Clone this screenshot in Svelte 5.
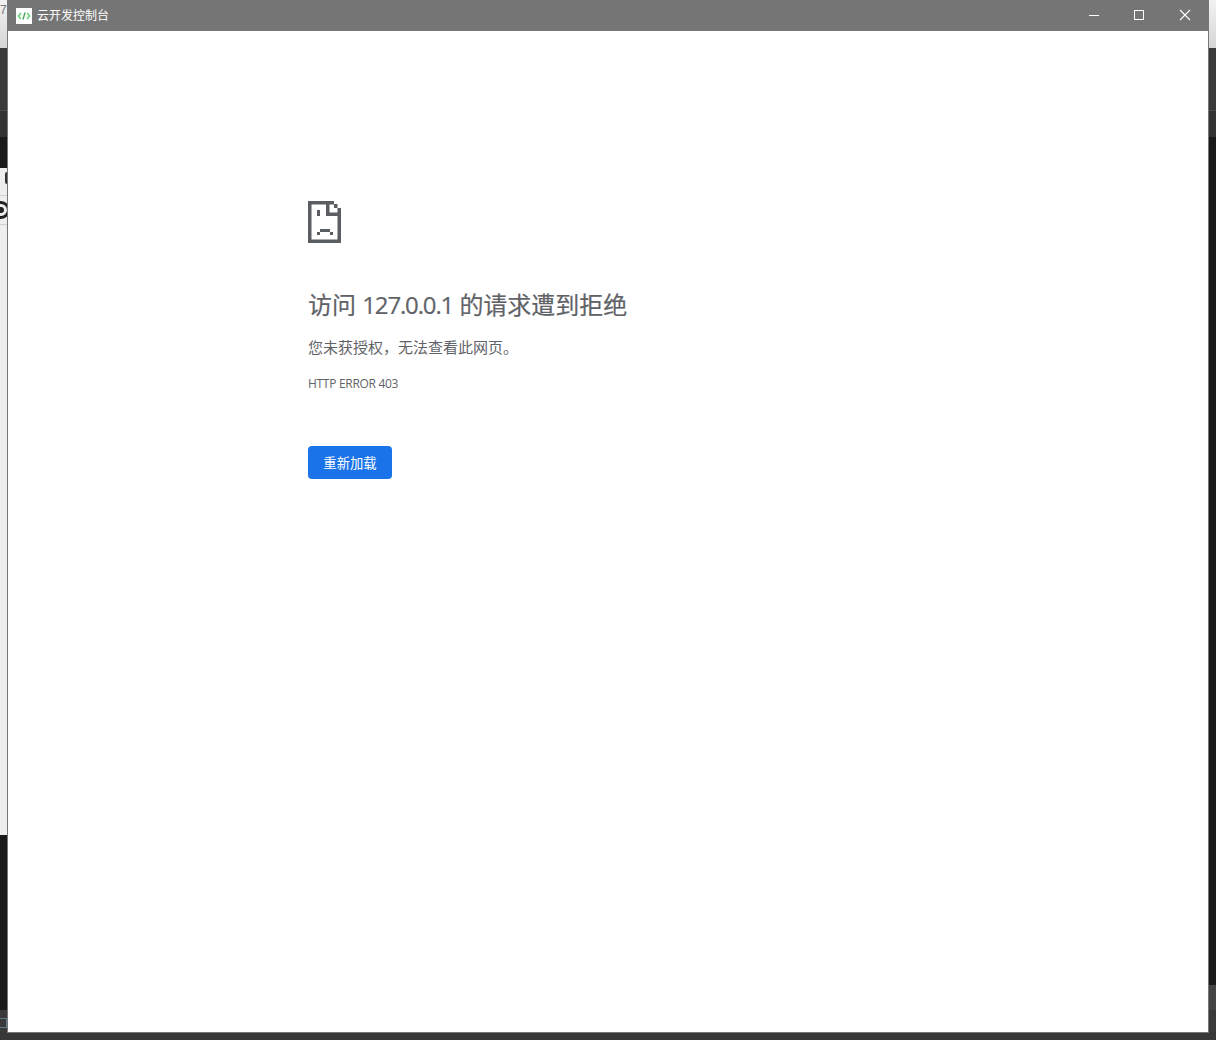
<script>
  const sadIcon = [
    [0,0,26,3.5],[0,0,3.5,42],[0,38.5,33,3.5],[29.5,11,3.5,31],
    [18,0,3.5,15],[18,11.5,15,3.5],[26,3,3.5,4],[29.5,7,3.5,5],
    [9,9,3,6],[9,31,3,3],[12,28,10,3],[22,31,3,3]
  ];
  const leftBands = [
    { h: 48, c: 'top' }, { h: 62, c: 'mid' }, { h: 27, c: 'low' }, { h: 31, c: 'ink' },
    { h: 27, c: 'paper' }, { h: 30, c: 'paper lined' }, { h: 610, c: 'paper' },
    { h: 175, c: 'ink' }, { h: 30, c: 'mid' }
  ];
  const rightBands = [
    { h: 48, c: 'top' }, { h: 62, c: 'mid' }, { h: 27, c: 'low' },
    { h: 848, c: 'ink' }, { h: 25, c: 'soft' }, { h: 30, c: 'mid' }
  ];
</script>

<div class="desk">
  <div class="edge">
    {#each leftBands as b}
      <div class="band {b.c}" style="height:{b.h}px"></div>
    {/each}
  </div>
  <div class="edge">
    {#each rightBands as b}
      <div class="band {b.c}" style="height:{b.h}px"></div>
    {/each}
  </div>
  <span class="frag-num">7</span>
  <span class="frag-paren"></span>
  <span class="frag-ring"></span>
  <span class="frag-box"></span>
  <div class="foot"></div>

  <div class="window">
    <header class="titlebar">
      <div class="logo">
        <svg width="16" height="16" viewBox="0 0 16 16" fill="none" stroke="#5fd068" stroke-width="1.4">
          <path d="M5 5 L2.5 8 L5 11" />
          <path d="M11 5 L13.5 8 L11 11" />
          <path d="M9 4.5 L7 11.5" stroke="#4aa85a" />
        </svg>
      </div>
      <span class="title">云开发控制台</span>
      <div class="controls">
        <svg class="ctl" width="46" height="30" viewBox="0 0 46 30" fill="none" stroke="#fff">
          <path d="M19 14.5 H29" />
        </svg>
        <svg class="ctl" width="46" height="30" viewBox="0 0 46 30" fill="none" stroke="#fff">
          <rect x="18.5" y="9.5" width="9" height="9" />
        </svg>
        <svg class="ctl" width="46" height="30" viewBox="0 0 46 30" fill="none" stroke="#fff" stroke-width="1.1">
          <path d="M18 9 L28 19 M28 9 L18 19" />
        </svg>
      </div>
    </header>
    <main class="page">
      <div class="error">
        <svg class="sad" width="33" height="42" viewBox="0 0 33 42" fill="#5a5d61">
          {#each sadIcon as r}
            <rect x={r[0]} y={r[1]} width={r[2]} height={r[3]} />
          {/each}
        </svg>
        <h1>访问 <span class="host">127.0.0.1</span> 的请求遭到拒绝</h1>
        <p class="msg">您未获授权&#xFF0C;无法查看此网页。</p>
        <p class="code">HTTP ERROR 403</p>
        <button class="reload">重新加载</button>
      </div>
    </main>
  </div>
</div>

<style>
  :global(body) {
    margin: 0;
    background: #1a1a1a;
  }
  .desk {
    position: relative;
    width: 1216px;
    height: 1040px;
    overflow: hidden;
    display: flex;
    justify-content: space-between;
    background: #2e2e2e;
    font-family: "Open Sans", "Noto Sans CJK SC", sans-serif;
  }
  .edge {
    width: 8px;
    display: flex;
    flex-direction: column;
  }
  .band { flex: none; }
  .top { background: linear-gradient(#f2f2f2, #d6d6d6); }
  .mid { background: #3a3a3a; }
  .low { background: #333; border-top: 1px solid #4a4a4a; box-sizing: border-box; }
  .ink { background: #1a1a1a; }
  .paper { background: #eee; }
  .lined { border-top: 1px solid #d0d0d0; border-bottom: 1px solid #d0d0d0; box-sizing: border-box; }
  .soft { background: #444; }
  .foot {
    position: absolute;
    left: 0;
    right: 0;
    bottom: 0;
    height: 8px;
    background: #383838;
  }
  .frag-num {
    position: absolute;
    left: 0;
    top: 3px;
    font: 12px "Liberation Sans", sans-serif;
    color: #777;
  }
  .frag-paren {
    position: absolute;
    left: 5px;
    top: 172px;
    width: 4px;
    height: 12px;
    border-left: 2px solid #333;
    border-radius: 3px;
    box-sizing: border-box;
  }
  .frag-ring {
    position: absolute;
    left: -8px;
    top: 201px;
    width: 18px;
    height: 18px;
    border: 3px solid #222;
    border-radius: 50%;
    box-sizing: border-box;
  }
  .frag-ring::after {
    content: "";
    position: absolute;
    left: 3px;
    top: 3px;
    width: 6px;
    height: 6px;
    border-radius: 50%;
    background: #222;
  }
  .frag-box {
    position: absolute;
    left: 0;
    top: 1018px;
    width: 7px;
    height: 10px;
    border: 1px solid #5d7a88;
    border-left: none;
    box-sizing: border-box;
  }
  .window {
    position: absolute;
    left: 7px;
    top: 0;
    width: 1202px;
    height: 1033px;
    box-sizing: border-box;
    border: 1px solid #777;
    background: #fff;
    display: flex;
    flex-direction: column;
  }
  .titlebar {
    flex: none;
    height: 30px;
    background: #757575;
    display: flex;
    align-items: center;
    padding-left: 8px;
  }
  .logo {
    width: 16px;
    height: 16px;
    background: #fff;
    margin-right: 5px;
  }
  .logo svg { display: block; }
  .title {
    color: #fff;
    font-size: 12px;
    position: relative;
    top: -1px;
  }
  .controls {
    margin-left: auto;
    display: flex;
  }
  .ctl { display: block; }
  .page {
    flex: 1;
    padding: 170px 0 0 300px;
  }
  .error {
    display: flex;
    flex-direction: column;
    align-items: flex-start;
    color: #5f6368;
  }
  .sad { display: block; }
  h1 {
    margin: 45px 0 0;
    font-size: 24px;
    font-weight: 400;
    line-height: 34px;
    -webkit-text-stroke: 0.2px #5f6368;
  }
  .host { letter-spacing: -1.15px; }
  .msg {
    margin: 15px 0 0;
    font-size: 15px;
    line-height: 20px;
  }
  .code {
    margin: 19px 0 0;
    font-size: 12px;
    line-height: 16px;
    letter-spacing: -0.3px;
  }
  .reload {
    margin-top: 54px;
    width: 84px;
    height: 33px;
    border: none;
    border-radius: 4px;
    background: #1a73e8;
    color: #fff;
    font: inherit;
    font-size: 13.33px;
    padding: 0;
  }
</style>
